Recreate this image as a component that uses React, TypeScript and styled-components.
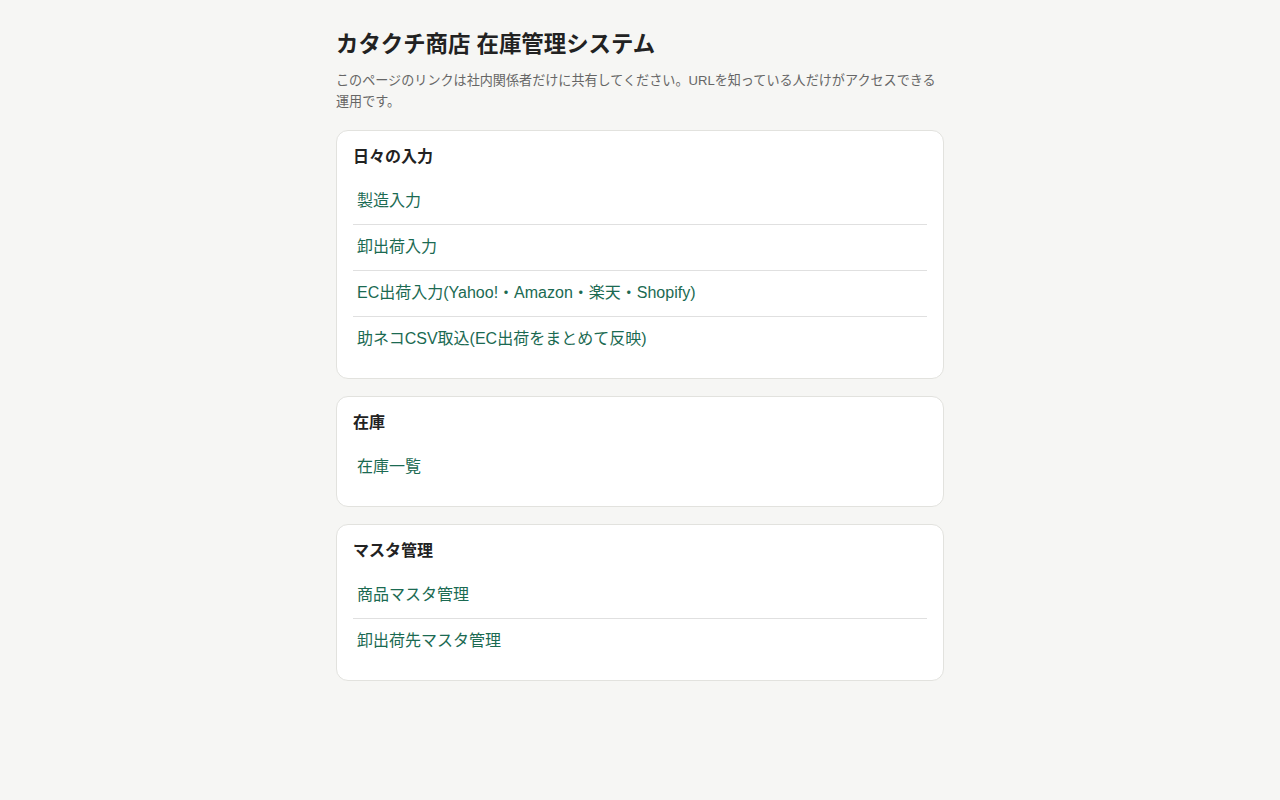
import React from "react";
import styled, { createGlobalStyle } from "styled-components";

const Global = createGlobalStyle`
  html, body { margin: 0; padding: 0; background: #f6f6f4; }
  body {
    font-family: "Liberation Sans", Arial, "Noto Sans CJK JP", sans-serif;
    color: #222;
  }
  * { box-sizing: border-box; }
`;

const Page = styled.main`
  width: 608px;
  margin: 0 auto;
  padding: 27px 0 40px;
`;

const Title = styled.h1`
  margin: 0;
  font-size: 22.4px;
  line-height: 36px;
  font-weight: 700;
  color: #222;
`;

const Lead = styled.p`
  margin: 7px 0 18px;
  font-size: 13.1px;
  line-height: 21px;
  color: #666;
`;

const Card = styled.section`
  background: #fff;
  border: 1px solid #e2e2de;
  border-radius: 12px;
  padding: 16px;
  & + & { margin-top: 17px; }
`;

const CardTitle = styled.h2`
  margin: 0 0 12px;
  font-size: 16px;
  line-height: 20px;
  font-weight: 700;
  color: #222;
`;

const List = styled.ul`
  list-style: none;
  margin: 0;
  padding: 0;
`;

const Item = styled.li`
  & + & { border-top: 1px solid #e0e0e0; }
`;

const Link = styled.a`
  display: block;
  padding: 11px 4px 12px;
  font-size: 16px;
  line-height: 22px;
  color: #1b6a52;
  text-decoration: none;
`;

const sections: { title: string; links: string[] }[] = [
  {
    title: "日々の入力",
    links: [
      "製造入力",
      "卸出荷入力",
      "EC出荷入力(Yahoo!・Amazon・楽天・Shopify)",
      "助ネコCSV取込(EC出荷をまとめて反映)",
    ],
  },
  { title: "在庫", links: ["在庫一覧"] },
  { title: "マスタ管理", links: ["商品マスタ管理", "卸出荷先マスタ管理"] },
];

export default function App() {
  return (
    <>
      <Global />
      <Page>
        <Title>カタクチ商店 在庫管理システム</Title>
        <Lead>
          このページのリンクは社内関係者だけに共有してください。URLを知っている人だけがアクセスできる運用です。
        </Lead>
        {sections.map((s) => (
          <Card key={s.title}>
            <CardTitle>{s.title}</CardTitle>
            <List>
              {s.links.map((l) => (
                <Item key={l}>
                  <Link href="#">{l}</Link>
                </Item>
              ))}
            </List>
          </Card>
        ))}
      </Page>
    </>
  );
}
